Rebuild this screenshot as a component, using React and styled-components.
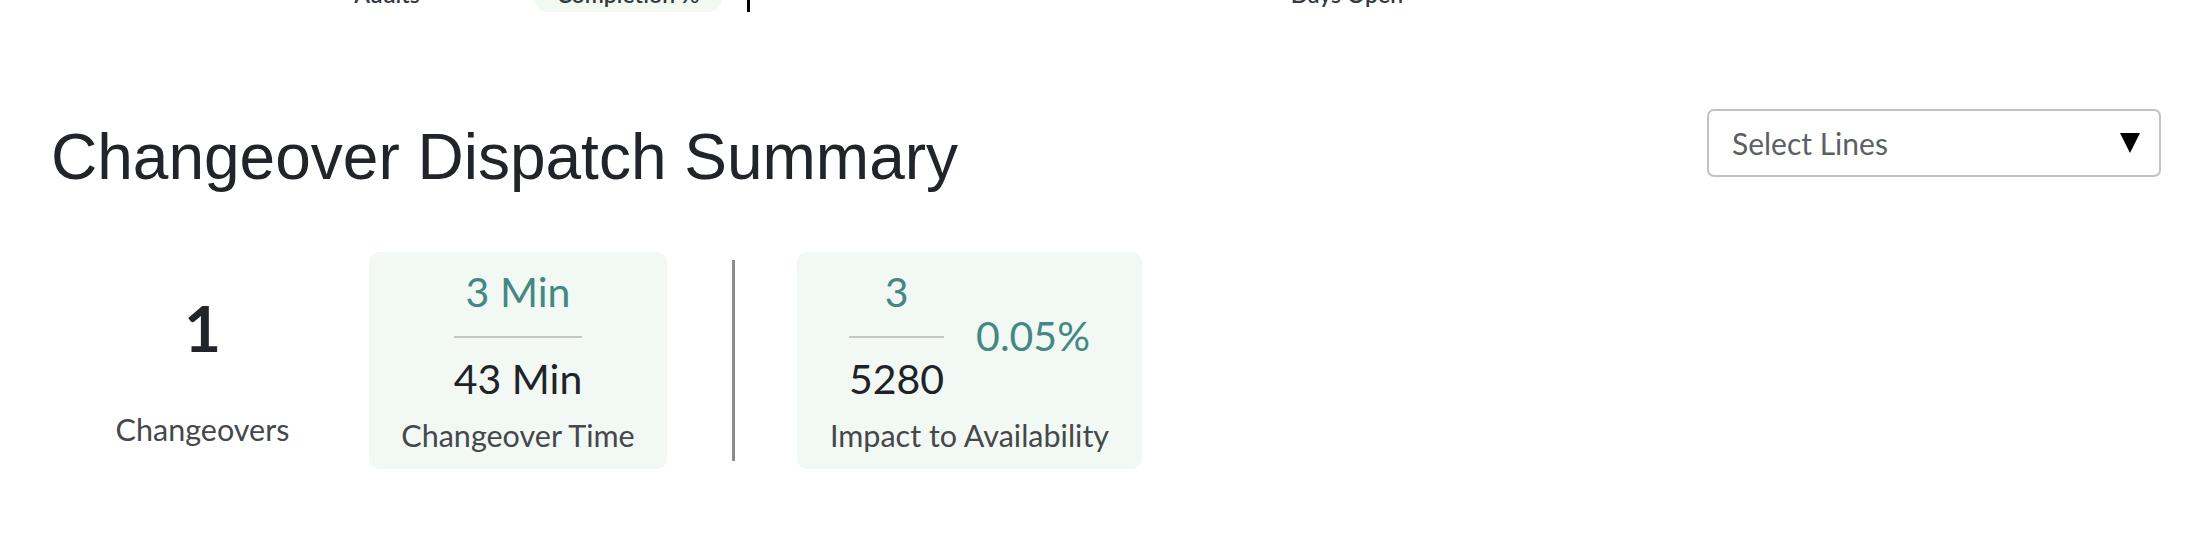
import React from 'react';
import styled, { createGlobalStyle } from 'styled-components';

const GlobalStyle = createGlobalStyle`
  html, body {
    margin: 0;
    padding: 0;
    background: #fff;
  }
  body {
    font-family: Lato, "Noto Sans", sans-serif;
    color: #212529;
  }
`;

const Page = styled.div`
  width: 2202px;
  height: 540px;
  box-sizing: border-box;
  padding: 0 41px 0 51px;
  overflow: hidden;
`;

/* tail end of the section above, cut off by the viewport */
const TopStrip = styled.div`
  display: flex;
  align-items: flex-end;
  height: 12px;
  overflow: hidden;
`;

const StripLabel = styled.div`
  width: 200px;
  margin-left: ${(p) => p.$offset}px;
  margin-bottom: 1px;
  text-align: center;
  font-size: 23px;
  font-weight: 600;
  line-height: 34px;
  color: #343a40;
`;

const StripPill = styled.div`
  width: 188px;
  margin-left: ${(p) => p.$offset}px;
  padding: 10px 0 1px;
  text-align: center;
  font-size: 23px;
  font-weight: 600;
  line-height: 34px;
  color: #343a40;
  background: #f2f9f3;
  border-radius: 0 0 14px 14px;
`;

const StripRule = styled.div`
  width: 3px;
  height: 12px;
  margin-left: ${(p) => p.$offset}px;
  background: #000;
`;

const HeaderRow = styled.div`
  display: flex;
  justify-content: space-between;
  align-items: flex-start;
  margin-top: 97px;
`;

const Title = styled.h1`
  margin: 10px 0 0;
  font-family: "Liberation Sans", Arial, sans-serif;
  font-weight: 400;
  font-size: 64px;
  line-height: 76px;
  color: #212529;
`;

const SelectBox = styled.button`
  display: flex;
  align-items: center;
  justify-content: space-between;
  width: 454px;
  height: 68px;
  box-sizing: border-box;
  padding: 0 19px 0 23px;
  background: #fff;
  border: 2px solid #c2c2c2;
  border-radius: 7px;
  font-family: Lato, "Noto Sans", sans-serif;
  font-size: 30px;
  color: #5b5f64;
  cursor: pointer;
`;

const Caret = styled.svg`
  width: 20px;
  height: 20px;
  fill: #000;
`;

const StatsRow = styled.div`
  display: flex;
  align-items: stretch;
  margin-top: 57px;
  padding-left: 33px;
`;

const PlainStat = styled.div`
  display: flex;
  flex-direction: column;
  align-items: center;
  width: 237px;
  height: 217px;
  margin-right: 48px;
  padding-top: 41px;
  box-sizing: border-box;
`;

const BigCount = styled.div`
  font-size: 64px;
  font-weight: 700;
  line-height: 70px;
  color: #212529;
`;

const Card = styled.div`
  display: flex;
  flex-direction: column;
  align-items: center;
  width: ${(p) => p.$width}px;
  height: 217px;
  box-sizing: border-box;
  padding-top: 15px;
  background: #f2f9f4;
  border-radius: 10px;
`;

const Label = styled.div`
  margin-top: ${(p) => p.$gap}px;
  font-size: 30.5px;
  line-height: 36px;
  color: #45484b;
  white-space: nowrap;
`;

const ValueRow = styled.div`
  display: flex;
  align-items: center;
  gap: 32px;
`;

const Fraction = styled.div`
  display: inline-flex;
  flex-direction: column;
  align-items: center;
`;

const Value = styled.div`
  font-size: 41px;
  line-height: 50px;
  color: ${(p) => (p.$accent ? '#438883' : '#1f2327')};
  white-space: nowrap;
`;

const Numerator = styled(Value)`
  align-self: stretch;
  text-align: center;
  padding-bottom: 19px;
  border-bottom: 2px solid #c6c7c2;
`;

const Denominator = styled(Value)`
  padding-top: 16px;
`;

const Separator = styled.div`
  width: 3px;
  margin: 8px 62px 8px 65px;
  background: #8d8d8d;
`;

const App = () => {
  return (
    <>
      <GlobalStyle />
      <Page>
        <TopStrip>
          <StripLabel $offset={236}>Audits</StripLabel>
          <StripPill $offset={47}>Completion %</StripPill>
          <StripRule $offset={25} />
          <StripLabel $offset={497}>Days Open</StripLabel>
        </TopStrip>

        <HeaderRow>
          <Title>Changeover Dispatch Summary</Title>
          <SelectBox type="button">
            <span>Select Lines</span>
            <Caret viewBox="0 0 20 20">
              <polygon points="0,0 20,0 10,20" />
            </Caret>
          </SelectBox>
        </HeaderRow>

        <StatsRow>
          <PlainStat>
            <BigCount>1</BigCount>
            <Label $gap={48}>Changeovers</Label>
          </PlainStat>

          <Card $width={298}>
            <Fraction>
              <Numerator $accent>3 Min</Numerator>
              <Denominator>43 Min</Denominator>
            </Fraction>
            <Label $gap={13}>Changeover Time</Label>
          </Card>

          <Separator />

          <Card $width={345}>
            <ValueRow>
              <Fraction>
                <Numerator $accent>3</Numerator>
                <Denominator>5280</Denominator>
              </Fraction>
              <Value $accent>0.05%</Value>
            </ValueRow>
            <Label $gap={13}>Impact to Availability</Label>
          </Card>
        </StatsRow>
      </Page>
    </>
  );
};

export default App;
